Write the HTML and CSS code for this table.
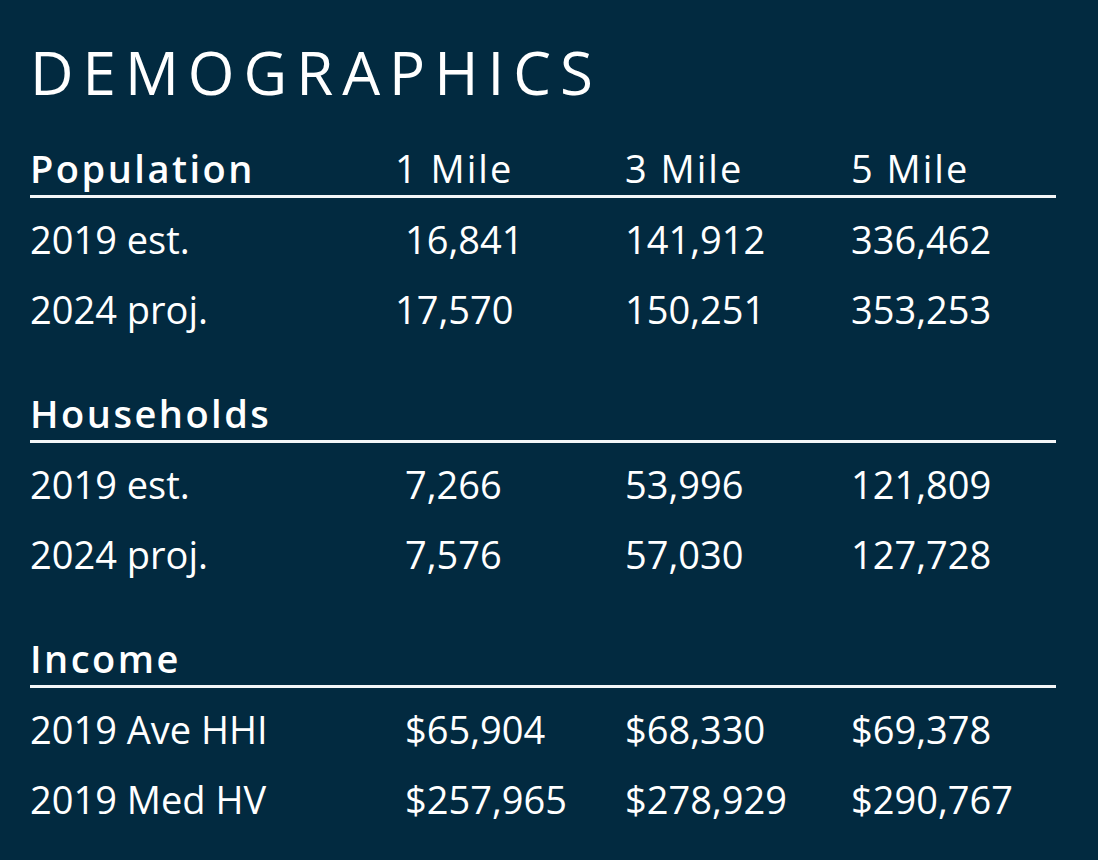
FILE: index.html
```html
<!DOCTYPE html>
<html lang="en">
<head>
<meta charset="utf-8">
<title>Demographics</title>
<link rel="stylesheet" href="styles.css">
</head>
<body>
<main class="sheet">
  <h1 class="title">DEMOGRAPHICS</h1>

  <section class="group">
    <div class="grid head">
      <span class="label">Population</span>
      <span class="col">1 Mile</span>
      <span class="col">3 Mile</span>
      <span class="col">5 Mile</span>
    </div>
    <div class="grid row">
      <span>2019 est.</span>
      <span class="v1">16,841</span>
      <span>141,912</span>
      <span>336,462</span>
    </div>
    <div class="grid row">
      <span>2024 proj.</span>
      <span>17,570</span>
      <span>150,251</span>
      <span>353,253</span>
    </div>
  </section>

  <section class="group">
    <div class="grid head">
      <span class="label">Households</span>
      <span></span><span></span><span></span>
    </div>
    <div class="grid row">
      <span>2019 est.</span>
      <span class="v1">7,266</span>
      <span>53,996</span>
      <span>121,809</span>
    </div>
    <div class="grid row">
      <span>2024 proj.</span>
      <span class="v1">7,576</span>
      <span>57,030</span>
      <span>127,728</span>
    </div>
  </section>

  <section class="group">
    <div class="grid head">
      <span class="label">Income</span>
      <span></span><span></span><span></span>
    </div>
    <div class="grid row">
      <span>2019 Ave HHI</span>
      <span class="v1">$65,904</span>
      <span>$68,330</span>
      <span>$69,378</span>
    </div>
    <div class="grid row">
      <span>2019 Med HV</span>
      <span class="v1">$257,965</span>
      <span>$278,929</span>
      <span>$290,767</span>
    </div>
  </section>
</main>
</body>
</html>
```

FILE: styles.css
```css
html, body {
  margin: 0;
  padding: 0;
}

body {
  background: #022a40;
  color: #ffffff;
  font-family: "Open Sans", "Liberation Sans", sans-serif;
  width: 1098px;
  height: 860px;
  overflow: hidden;
}

.sheet {
  padding: 42px 42px 0 30px;
}

.title {
  margin: 0 0 46px 0;
  font-size: 60px;
  line-height: 60px;
  font-weight: 400;
  letter-spacing: 9px;
}

.group {
  margin-bottom: 49px;
}

.grid {
  display: grid;
  grid-template-columns: 365px 230px 226px 1fr;
  font-size: 38px;
  white-space: nowrap;
}

.head {
  line-height: 40px;
  padding-bottom: 7px;
  border-bottom: 3px solid #f4f6f8;
  font-weight: 600;
  letter-spacing: 2.5px;
}

.head .col {
  font-weight: 500;
  letter-spacing: 2px;
}

.head + .row {
  margin-top: 6px;
}

.row {
  line-height: 70px;
  font-weight: 400;
}

.v1 {
  padding-left: 10px;
}
```
